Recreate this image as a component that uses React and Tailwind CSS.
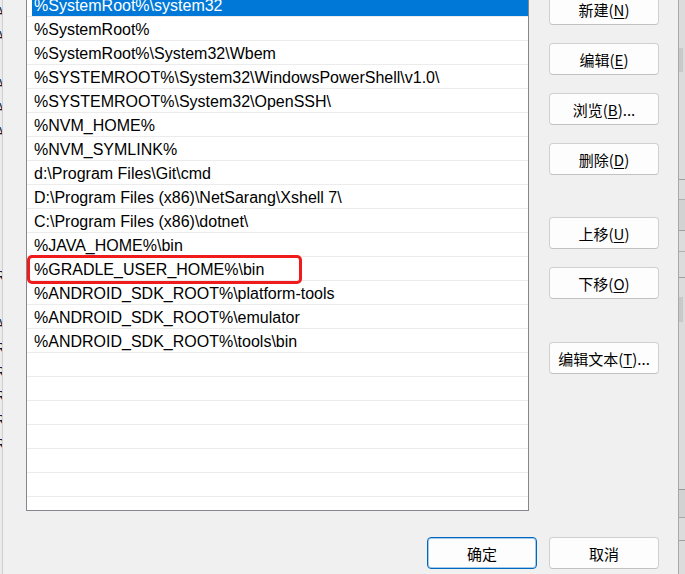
import React from 'react';

const entries = [
  '%SystemRoot%\\system32',
  '%SystemRoot%',
  '%SystemRoot%\\System32\\Wbem',
  '%SYSTEMROOT%\\System32\\WindowsPowerShell\\v1.0\\',
  '%SYSTEMROOT%\\System32\\OpenSSH\\',
  '%NVM_HOME%',
  '%NVM_SYMLINK%',
  'd:\\Program Files\\Git\\cmd',
  'D:\\Program Files (x86)\\NetSarang\\Xshell 7\\',
  'C:\\Program Files (x86)\\dotnet\\',
  '%JAVA_HOME%\\bin',
  '%GRADLE_USER_HOME%\\bin',
  '%ANDROID_SDK_ROOT%\\platform-tools',
  '%ANDROID_SDK_ROOT%\\emulator',
  '%ANDROID_SDK_ROOT%\\tools\\bin',
  '', '', '', '', '', '',
];

const cjk = { fontFamily: '"Noto Sans CJK SC", "Noto Sans", sans-serif' };
const latin = { fontFamily: '"Liberation Sans", Arial, sans-serif' };

function Btn({ label, hotkey, suffix = '', primary = false, className = '' }) {
  return (
    <button
      style={cjk}
      className={`w-[110px] h-[32px] shrink-0 rounded-[4px] bg-[#fdfdfd] text-[15px] text-black leading-none flex items-center justify-center ${
        primary
          ? 'border border-[#0067c0] shadow-[inset_0_0_0_1px_rgba(0,103,192,0.35)]'
          : 'border border-[#d0d0d0] border-b-[#c2c2c2]'
      } ${className}`}
    >
      {label}
      {hotkey && (
        <>
          (<span className="underline underline-offset-2 decoration-1">{hotkey}</span>){suffix}
        </>
      )}
    </button>
  );
}

export default function App() {
  return (
    <div className="relative w-[685px] h-[574px] overflow-hidden bg-[#f0f0f0] flex">
      {/* window behind, left edge */}
      <div className="w-[3px] shrink-0 bg-[#ebebeb] border-r border-[#cfcfcf] overflow-hidden flex flex-col text-[14px] leading-[24px] text-[#1a1a40]" style={latin}>
        {['A', 'A', '', 'A', 'A', 'A', '', '', '', '', '', 'R', 'I', 'A', 'R', 'R', 'R', 'R', 'R'].map((c, i) => (
          <span key={i} className="-ml-[5px] h-[24px]">{c}</span>
        ))}
      </div>

      <div className="flex-1 flex flex-col pl-[23px]">
        <div className="flex items-start -mt-[8px]">
          {/* list box */}
          <div className="w-[503px] h-[519px] shrink-0 bg-white border border-[#85878c] flex flex-col overflow-hidden" style={latin}>
            {entries.map((e, i) => (
              <div key={i} className="h-[24px] shrink-0 border-b border-[#ececec] pl-[5px] flex">
                <div className={`flex-1 flex items-center pl-[2px] pt-[2px] text-[16px] whitespace-nowrap ${i === 0 ? 'bg-[#0078d7] text-white' : 'text-black'}`}>
                  {e}
                </div>
              </div>
            ))}
          </div>

          {/* side buttons */}
          <div className="ml-[20px] pt-[1px] flex flex-col">
            <Btn label="新建" hotkey="N" />
            <Btn label="编辑" hotkey="E" className="mt-[18px]" />
            <Btn label="浏览" hotkey="B" suffix="..." className="mt-[18px]" />
            <Btn label="删除" hotkey="D" className="mt-[18px]" />
            <Btn label="上移" hotkey="U" className="mt-[42px]" />
            <Btn label="下移" hotkey="O" className="mt-[18px]" />
            <Btn label="编辑文本" hotkey="T" suffix="..." className="mt-[43px]" />
          </div>
        </div>

        <div className="flex justify-end gap-[12px] mt-[26px] pr-[19px]">
          <Btn label="确定" primary />
          <Btn label="取消" />
        </div>
      </div>

      {/* window behind, right edge */}
      <div className="w-[7px] shrink-0 border-l border-[#a8a8a8] bg-[#dcdcdc] flex flex-col">
        <div className="h-[48px]" />
        <div className="h-[24px] w-[4px] bg-[#c9c9c9]" />
        <div className="h-[107px]" />
        <div className="h-[20px] border-t border-[#a0a0a0]" />
        <div className="h-[31px] border-t border-[#b0b0b0] bg-[#d2d2d2]" />
        <div className="h-[21px] border-t border-[#a0a0a0]" />
        <div className="h-[26px] border-t border-[#b0b0b0]" />
        <div className="h-[20px] border-t border-[#a0a0a0]" />
        <div className="h-[25px] w-[4px] bg-[#c9c9c9]" />
        <div className="h-[167px]" />
        <div className="h-[28px] border-t border-[#9a9a9a] bg-[#d2d2d2]" />
        <div className="h-[23px] border-t border-[#a8a8a8]" />
        <div className="flex-1 border-t border-[#a0a0a0]" />
      </div>

      {/* red highlight */}
      <div className="absolute left-[27px] top-[255px] w-[275px] h-[29px] border-[3px] border-[#f01c1c] rounded-[5px]" />
    </div>
  );
}
